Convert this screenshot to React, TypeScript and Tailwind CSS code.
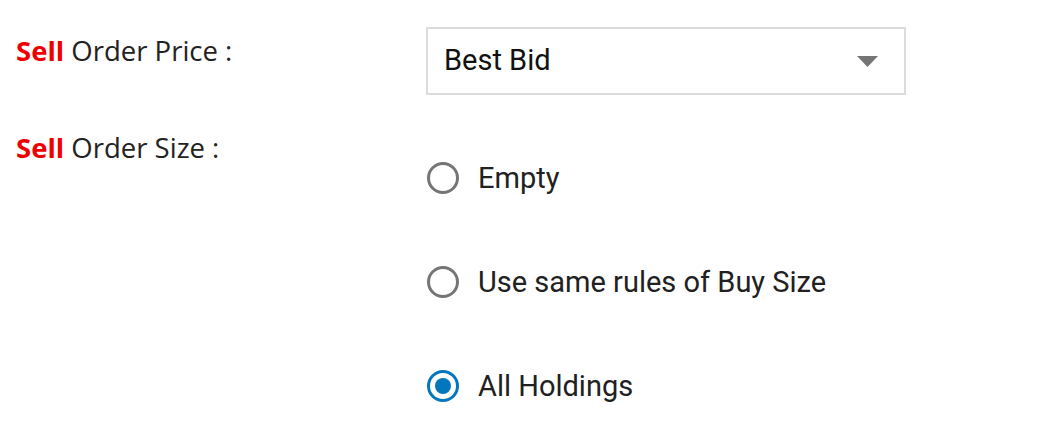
import React from "react";

function Radio({ checked, label }: { checked?: boolean; label: string }) {
  return (
    <div className="flex items-center h-[32px]">
      {checked ? (
        <span className="w-[32px] h-[32px] rounded-full border-[3px] border-[#0277bd] flex items-center justify-center">
          <span className="w-[16px] h-[16px] rounded-full bg-[#0277bd]" />
        </span>
      ) : (
        <span className="w-[32px] h-[32px] rounded-full border-[3px] border-[#757575]" />
      )}
      <span className="ml-[19px] text-[29px] text-[#212121] leading-none" style={{ fontFamily: "Roboto, sans-serif" }}>
        {label}
      </span>
    </div>
  );
}

export default function App() {
  return (
    <div className="w-[1046px] h-[424px] bg-white relative">
      <div className="flex pt-[27px]">
        <div className="w-[426px] shrink-0 pl-[16px] pt-[6px] text-[27.5px] leading-[36px] text-[#222]" style={{ fontFamily: "'Open Sans', sans-serif" }}>
          <span className="font-bold text-[#ee0000]">Sell</span> Order Price :
        </div>
        <div className="w-[480px] h-[68px] border-2 border-[#dcdcdc] flex items-center pl-[16px] pr-[26px]">
          <span className="flex-1 text-[29px] text-[#111]" style={{ fontFamily: "Roboto, sans-serif" }}>Best Bid</span>
          <svg width="21" height="11" viewBox="0 0 21 11"><polygon points="0,0 21,0 10.5,11" fill="#757575" /></svg>
        </div>
      </div>
      <div className="flex pt-[35px]">
        <div className="w-[426px] shrink-0 pl-[16px] text-[27.5px] leading-[36px] text-[#222]" style={{ fontFamily: "'Open Sans', sans-serif" }}>
          <span className="font-bold text-[#ee0000]">Sell</span> Order Size :
        </div>
        <div className="flex flex-col gap-[72px] pt-[32px] pl-[1px]">
          <Radio label="Empty" />
          <Radio label="Use same rules of Buy Size" />
          <Radio checked label="All Holdings" />
        </div>
      </div>
    </div>
  );
}
